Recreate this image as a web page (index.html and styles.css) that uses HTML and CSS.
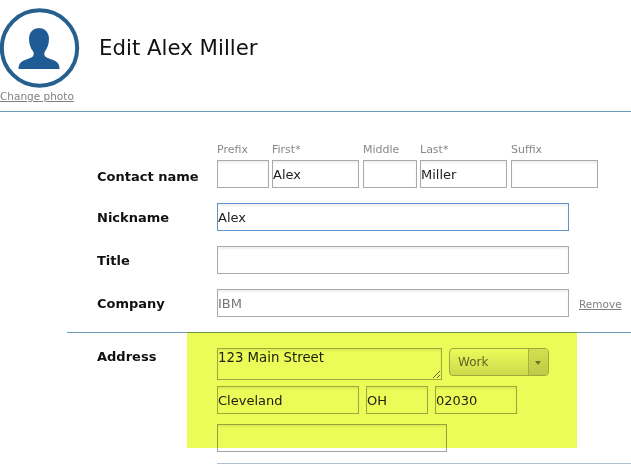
FILE: index.html
```html
<!DOCTYPE html>
<html lang="en">
<head>
    <meta charset="UTF-8">
    <title>Edit Alex Miller</title>
    <link rel="stylesheet" href="styles.css">
</head>
<body>

<div class="header">
    <div class="photo">
        <svg class="avatar" width="80" height="80" viewBox="0 0 80 80">
            <circle cx="39.5" cy="40" r="37.7" fill="none" stroke="#25608f" stroke-width="4"/>
            <path d="M39.500 20c-6.500 0-10.500 4.500-10.500 11 0 5 1.800 9.500 4 12.300 1 1.300 1 4-.2 5.200-2.500 2.200-9 3.200-11.500 5.500-2.200 2-2.800 4.500-2.800 6.500v.5h41v-.5c0-2-.6-4.500-2.800-6.500-2.500-2.300-9-3.300-11.500-5.500-1.200-1.200-1.200-3.900-.2-5.200 2.200-2.800 4-7.300 4-12.300 0-6.500-4-11-10.500-11z" fill="#1f5b94"/>
        </svg>
        <a class="link" href="#">Change photo</a>
    </div>
    <h1>Edit Alex Miller</h1>
</div>

<div class="form">
    <div class="row name-row">
        <div class="label">Contact name</div>
        <div class="part w52"><span>Prefix</span><input type="text"></div>
        <div class="part w87 g3"><span>First*</span><input type="text" value="Alex"></div>
        <div class="part w54 g4"><span>Middle</span><input type="text"></div>
        <div class="part w87 g3"><span>Last*</span><input type="text" value="Miller"></div>
        <div class="part w87 g4"><span>Suffix</span><input type="text"></div>
    </div>
    <div class="row">
        <div class="label">Nickname</div>
        <input class="wide focus" type="text" value="Alex">
    </div>
    <div class="row">
        <div class="label">Title</div>
        <input class="wide" type="text">
    </div>
    <div class="row company">
        <div class="label">Company</div>
        <input class="wide grey" type="text" value="IBM">
        <a class="link remove" href="#">Remove</a>
    </div>
</div>

<div class="address">
    <div class="label addr-label">Address</div>
    <div class="addr-fields">
        <div class="addr-top">
            <textarea>123 Main Street</textarea>
            <div class="select">
                <span class="select-text">Work</span>
                <span class="select-arrow"></span>
            </div>
        </div>
        <div class="addr-mid">
            <input class="city" type="text" value="Cleveland">
            <input class="state" type="text" value="OH">
            <input class="zip" type="text" value="02030">
        </div>
        <input class="line2" type="text">
    </div>
    <div class="bottom-line"></div>
</div>

<div class="marker"></div>

</body>
</html>
```

FILE: styles.css
```css
html, body{
    margin: 0;
    height: 464px;
    overflow: hidden;
}
body{
    background-color: white;
    font-family: "DejaVu Sans", sans-serif;
    position: relative;
}
.header{
    display: flex;
    height: 111px;
    border-bottom: 1px solid #6f9dbd;
}
.photo{
    width: 99px;
    padding-top: 8px;
}
.avatar{
    display: block;
}
.link{
    display: block;
    color: #808080;
    font-size: 10.500px;
    line-height: 14px;
    text-decoration: underline;
}
.photo .link{
    padding-top: 1px;
}
h1{
    margin: 0;
    padding-top: 35px;
    font-size: 21.300px;
    line-height: 26px;
    font-weight: normal;
    color: #111;
}
.form{
    height: 220px;
}
.row{
    display: flex;
    align-items: center;
    margin-bottom: 15px;
}
.label{
    box-sizing: border-box;
    width: 217px;
    padding-left: 97px;
    font-size: 13px;
    font-weight: bold;
    color: #111;
}
input, textarea{
    box-sizing: border-box;
    display: block;
    margin: 0;
    padding: 0;
    height: 28px;
    border: 1px solid #aaa;
    border-radius: 0;
    background: white;
    font-family: "DejaVu Sans", sans-serif;
    font-size: 13px;
    color: #222;
    outline: none;
    box-shadow: inset 0 2px 2px #f0f0f0;
}
.name-row{
    align-items: flex-end;
    padding-top: 31px;
}
.name-row .label{
    line-height: 28px;
    margin-bottom: -3px;
}
.part span{
    display: block;
    font-size: 11px;
    line-height: 14px;
    margin-bottom: 3px;
    color: #888;
}
.part input{
    width: 100%;
}
.w52{ width: 52px; }
.w54{ width: 54px; }
.w87{ width: 87px; }
.g3{ margin-left: 3px; }
.g4{ margin-left: 4px; }
.wide{
    width: 352px;
}
.focus{
    border-color: #5f94cf;
}
.grey{
    color: #777;
}
.remove{
    margin-left: 10px;
    padding-top: 1px;
}
.address{
    display: flex;
    flex-wrap: wrap;
    align-content: flex-start;
    height: 132px;
    margin-left: 67px;
    border-top: 1px solid #6f9dbd;
    padding-top: 15px;
}
.addr-label{
    width: 150px;
    padding-left: 30px;
    line-height: 18px;
}
.addr-fields{
    width: 414px;
}
.addr-top{
    display: flex;
}
textarea{
    width: 225px;
    height: 32px;
    line-height: 17px;
    font-size: 13.300px;
}
.select{
    box-sizing: border-box;
    display: flex;
    width: 100px;
    height: 28px;
    margin-left: 7px;
    border: 1px solid #aaa;
    border-radius: 4px;
    background: linear-gradient(#fff, #dedede);
    font-size: 12px;
    line-height: 26px;
    color: #666;
}
.select-text{
    flex: 1;
    padding-left: 8px;
}
.select-arrow{
    position: relative;
    width: 19px;
    border-left: 1px solid #b4b4b4;
    background: linear-gradient(#e4e4e4, #cfcfcf);
    border-radius: 0 3px 3px 0;
}
.select-arrow::after{
    content: "";
    position: absolute;
    left: 6px;
    top: 12px;
    border-left: 3px solid transparent;
    border-right: 3px solid transparent;
    border-top: 4px solid #777;
}
.addr-mid{
    display: flex;
    gap: 7px;
    margin-top: 6px;
}
.city{ width: 142px; }
.state{ width: 62px; }
.zip{ width: 82px; }
.line2{
    width: 230px;
    margin-top: 10px;
    border-color: #a4a4a4;
}
.bottom-line{
    width: 414px;
    height: 1px;
    margin-left: 150px;
    margin-top: 11px;
    background-color: #a9c0d4;
}
/* highlighter drawn over the address block */
.marker{
    position: absolute;
    left: 187px;
    top: 332px;
    width: 390px;
    height: 116px;
    background-color: #ebfb58;
    mix-blend-mode: multiply;
}
```
